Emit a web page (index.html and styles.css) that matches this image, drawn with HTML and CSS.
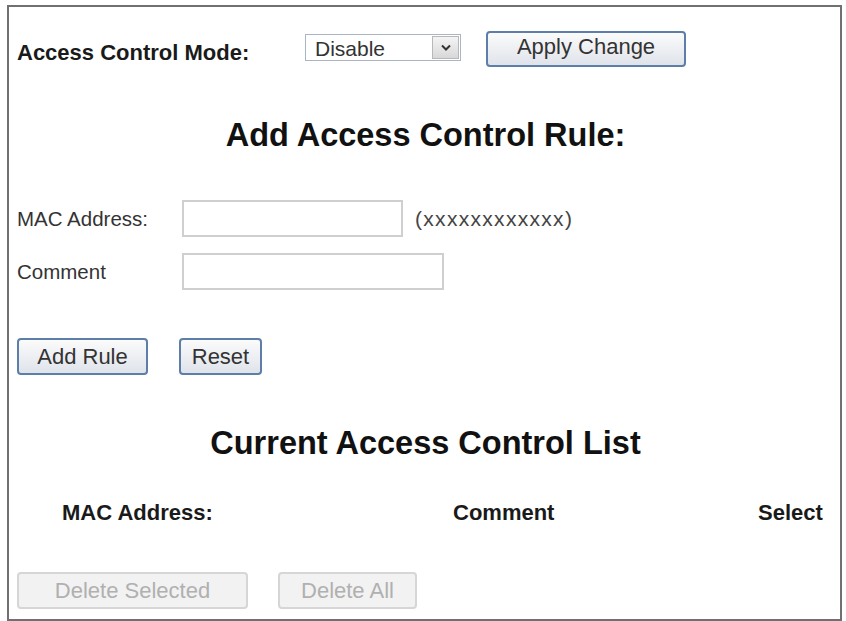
FILE: index.html
```html
<!DOCTYPE html>
<html lang="en">
<head>
  <meta charset="UTF-8">
  <title>Access Control</title>
  <link rel="stylesheet" href="styles.css">
</head>
<body>
  <div class="frame">
    <div class="mode-row">
      <span class="mode-label">Access Control Mode:</span>
      <div class="select">
        <span class="select-value">Disable</span>
        <span class="select-arrow">
          <svg width="10" height="7" viewBox="0 0 10 7"><path d="M1 1.5 L5 5.5 L9 1.5" fill="none" stroke="#333" stroke-width="2"/></svg>
        </span>
      </div>
      <button class="btn btn-apply">Apply Change</button>
    </div>

    <h2 class="heading heading-add">Add Access Control Rule:</h2>

    <div class="field-row">
      <span class="field-label">MAC Address:</span>
      <div class="input input-mac"></div>
      <span class="hint">(xxxxxxxxxxxx)</span>
    </div>
    <div class="field-row field-row-comment">
      <span class="field-label">Comment</span>
      <div class="input input-comment"></div>
    </div>

    <div class="button-row">
      <button class="btn btn-add">Add Rule</button>
      <button class="btn btn-reset">Reset</button>
    </div>

    <h2 class="heading heading-list">Current Access Control List</h2>

    <div class="list-head">
      <span class="col-mac">MAC Address:</span>
      <span class="col-comment">Comment</span>
      <span class="col-select">Select</span>
    </div>

    <div class="delete-row">
      <button class="btn btn-disabled btn-del-sel" disabled>Delete Selected</button>
      <button class="btn btn-disabled btn-del-all" disabled>Delete All</button>
    </div>
  </div>
</body>
</html>
```

FILE: styles.css
```css
body {
  margin: 0;
  padding: 0;
  background: #fff;
  font-family: "Liberation Sans", Arial, sans-serif;
  color: #222;
}

.frame {
  margin: 5px 0 0 7px;
  width: 835px;
  height: 616px;
  border: 2px solid #707070;
  box-sizing: border-box;
  padding: 0 0 0 8px;
}

.mode-row {
  display: flex;
  align-items: flex-start;
  margin-top: 24px;
  height: 38px;
}

.mode-label {
  width: 288px;
  font-weight: bold;
  font-size: 22px;
  color: #1a1a1a;
  margin-top: 9px;
}

.select {
  width: 156px;
  height: 27px;
  margin-top: 3px;
  border: 1px solid #a9b4c4;
  box-sizing: border-box;
  display: flex;
  align-items: stretch;
}

.select-value {
  flex: 1;
  font-size: 21px;
  line-height: 27px;
  padding-left: 9px;
  color: #333;
}

.select-arrow {
  width: 25px;
  margin: 1px;
  background: linear-gradient(#f4f4f4, #d8d8d8);
  border: 1px solid #b8b8b8;
  display: flex;
  align-items: center;
  justify-content: center;
}

.btn {
  font-family: "Liberation Sans", Arial, sans-serif;
  font-size: 22px;
  color: #333;
  background: linear-gradient(#fbfbfb, #dfe3ea);
  border: 2px solid #5d7ea8;
  border-radius: 4px;
  padding: 0;
  box-sizing: border-box;
}

.btn-apply {
  margin-left: 25px;
  width: 200px;
  height: 36px;
  padding-bottom: 4px;
}

.heading {
  text-align: center;
  font-weight: bold;
  font-size: 32.5px;
  line-height: 38px;
  color: #111;
  margin: 0;
  padding-right: 6px;
}

.heading-add {
  margin-top: 47px;
}

.field-row {
  display: flex;
  align-items: center;
  margin-top: 46px;
  height: 37px;
}

.field-row-comment {
  margin-top: 16px;
}

.field-label {
  width: 165px;
  font-size: 20.5px;
  color: #333;
}

.input {
  height: 37px;
  border: 2px solid #cfcfcf;
  box-sizing: border-box;
}

.input-mac {
  width: 221px;
}

.input-comment {
  width: 262px;
}

.hint {
  margin-left: 12px;
  font-size: 21px;
  letter-spacing: 1.3px;
  color: #444;
}

.button-row {
  display: flex;
  margin-top: 48px;
}

.btn-add {
  width: 131px;
  height: 37px;
}

.btn-reset {
  width: 83px;
  height: 37px;
  margin-left: 31px;
}

.heading-list {
  margin-top: 49px;
}

.list-head {
  display: flex;
  margin-top: 38px;
  font-weight: bold;
  font-size: 22px;
  color: #1a1a1a;
}

.col-mac {
  margin-left: 45px;
  width: 391px;
}

.col-comment {
  width: 305px;
}

.delete-row {
  display: flex;
  margin-top: 46px;
}

.btn-disabled {
  color: #b0b0b0;
  background: #f2f2f2;
  border: 2px solid #d6d6d6;
  height: 37px;
}

.btn-del-sel {
  width: 231px;
}

.btn-del-all {
  width: 139px;
  margin-left: 30px;
}
```
